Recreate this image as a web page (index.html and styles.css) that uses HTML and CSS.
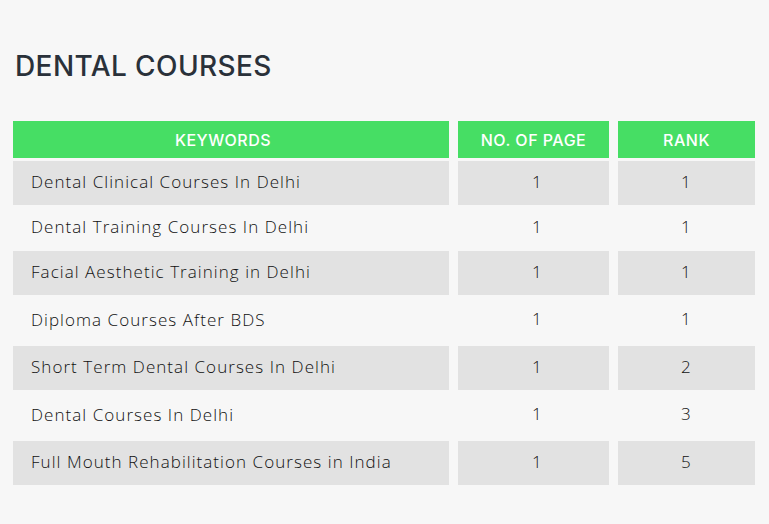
FILE: index.html
```html
<!DOCTYPE html>
<html lang="en">
<head>
<meta charset="utf-8">
<title>Dental Courses</title>
<link rel="stylesheet" href="styles.css">
</head>
<body>
<main class="page">
  <h1 class="title">DENTAL COURSES</h1>
  <div class="table">
    <div class="row head">
      <div class="cell kw">KEYWORDS</div>
      <div class="cell">NO. OF PAGE</div>
      <div class="cell">RANK</div>
    </div>
    <div class="row alt">
      <div class="cell kw">Dental Clinical Courses In Delhi</div>
      <div class="cell num page-no">1</div>
      <div class="cell num">1</div>
    </div>
    <div class="row short">
      <div class="cell kw">Dental Training Courses In Delhi</div>
      <div class="cell num page-no">1</div>
      <div class="cell num">1</div>
    </div>
    <div class="row alt">
      <div class="cell kw">Facial Aesthetic Training in Delhi</div>
      <div class="cell num page-no">1</div>
      <div class="cell num">1</div>
    </div>
    <div class="row tall">
      <div class="cell kw">Diploma Courses After BDS</div>
      <div class="cell num page-no">1</div>
      <div class="cell num">1</div>
    </div>
    <div class="row alt">
      <div class="cell kw">Short Term Dental Courses In Delhi</div>
      <div class="cell num page-no">1</div>
      <div class="cell num">2</div>
    </div>
    <div class="row tall">
      <div class="cell kw">Dental Courses In Delhi</div>
      <div class="cell num page-no">1</div>
      <div class="cell num">3</div>
    </div>
    <div class="row alt">
      <div class="cell kw">Full Mouth Rehabilitation Courses in India</div>
      <div class="cell num page-no">1</div>
      <div class="cell num">5</div>
    </div>
  </div>
</main>
</body>
</html>
```

FILE: styles.css
```css
html, body {
  margin: 0;
  padding: 0;
  background: #f7f7f7;
}
body {
  font-family: Inter, "Open Sans", "Liberation Sans", sans-serif;
  color: #222;
}
.page {
  padding: 46px 13px 0 13px;
  width: 742px;
}
.title {
  margin: 0 0 0 2px;
  font-size: 28px;
  font-weight: 500;
  line-height: 40px;
  letter-spacing: 0.4px;
  color: #2a313a;
}
.table {
  display: flex;
  flex-direction: column;
  gap: 3px;
  margin-top: 35px;
}
.row {
  display: grid;
  grid-template-columns: 436px 151px 137px;
  column-gap: 9px;
  height: 44px;
}
.row.head {
  height: 37px;
}
.row.short {
  height: 40px;
}
.row.tall {
  height: 45px;
}
.cell {
  display: flex;
  align-items: center;
  justify-content: center;
  font-family: "Open Sans", "Liberation Sans", sans-serif;
  font-size: 17px;
  font-weight: 300;
  letter-spacing: 1.05px;
  color: #111111;
  padding-bottom: 3px;
}
.cell.kw {
  justify-content: flex-start;
  padding-left: 18px;
}
.head .cell {
  font-family: Inter, "Open Sans", sans-serif;
  background: #46de64;
  color: #ffffff;
  font-weight: 500;
  font-size: 16px;
  letter-spacing: 0.5px;
  padding-bottom: 0;
}
.head .cell.kw {
  justify-content: center;
  padding-left: 0;
  padding-right: 16px;
}
.alt .cell {
  background: #e2e2e2;
}
.num {
  padding-bottom: 4px;
}
.num.page-no {
  padding-left: 8px;
}
```
